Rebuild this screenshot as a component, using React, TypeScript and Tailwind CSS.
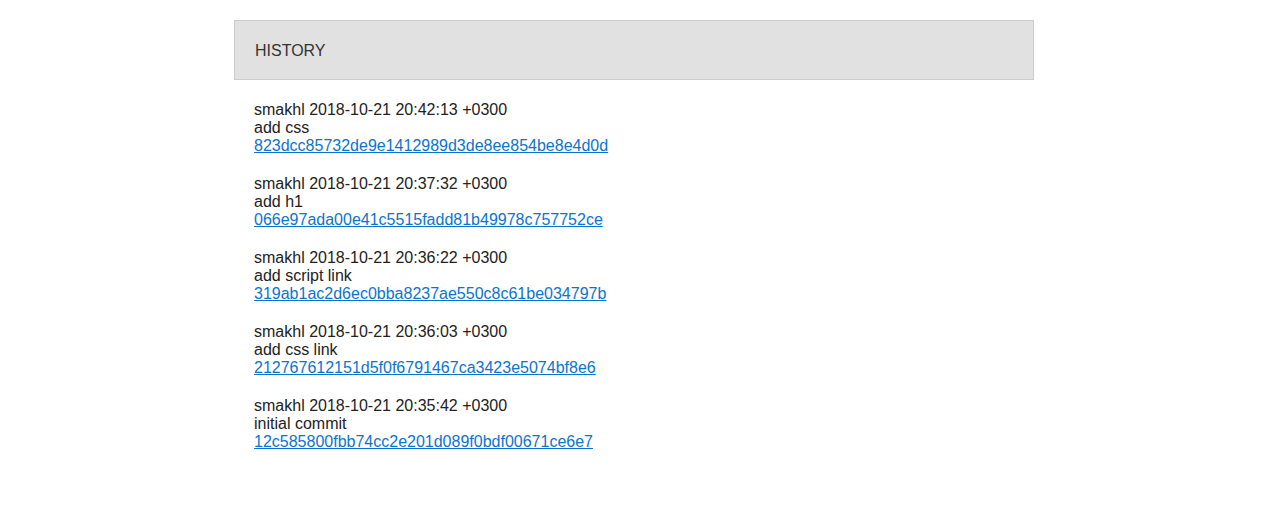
const commits = [
  { author: "smakhl", date: "2018-10-21 20:42:13 +0300", message: "add css", hash: "823dcc85732de9e1412989d3de8ee854be8e4d0d" },
  { author: "smakhl", date: "2018-10-21 20:37:32 +0300", message: "add h1", hash: "066e97ada00e41c5515fadd81b49978c757752ce" },
  { author: "smakhl", date: "2018-10-21 20:36:22 +0300", message: "add script link", hash: "319ab1ac2d6ec0bba8237ae550c8c61be034797b" },
  { author: "smakhl", date: "2018-10-21 20:36:03 +0300", message: "add css link", hash: "212767612151d5f0f6791467ca3423e5074bf8e6" },
  { author: "smakhl", date: "2018-10-21 20:35:42 +0300", message: "initial commit", hash: "12c585800fbb74cc2e201d089f0bdf00671ce6e7" },
];

export default function App() {
  return (
    <div className="min-h-screen bg-white pt-5 font-['Liberation_Sans',Arial,sans-serif] text-[16px] leading-[18px] text-[#222]">
      <div className="mx-auto w-[800px]">
        <div className="flex h-[60px] items-center border border-[#cccccc] bg-[#e1e1e1] px-5 pt-[2px] text-[#333]">
          HISTORY
        </div>
        <ul className="flex flex-col gap-5 px-5 pt-[21px] pb-5">
          {commits.map((c) => (
            <li key={c.hash} className="flex flex-col">
              <span>
                {c.author} {c.date}
              </span>
              <span>{c.message}</span>
              <a href={`#${c.hash}`} className="self-start text-[#0b74cf] underline">
                {c.hash}
              </a>
            </li>
          ))}
        </ul>
      </div>
    </div>
  );
}
